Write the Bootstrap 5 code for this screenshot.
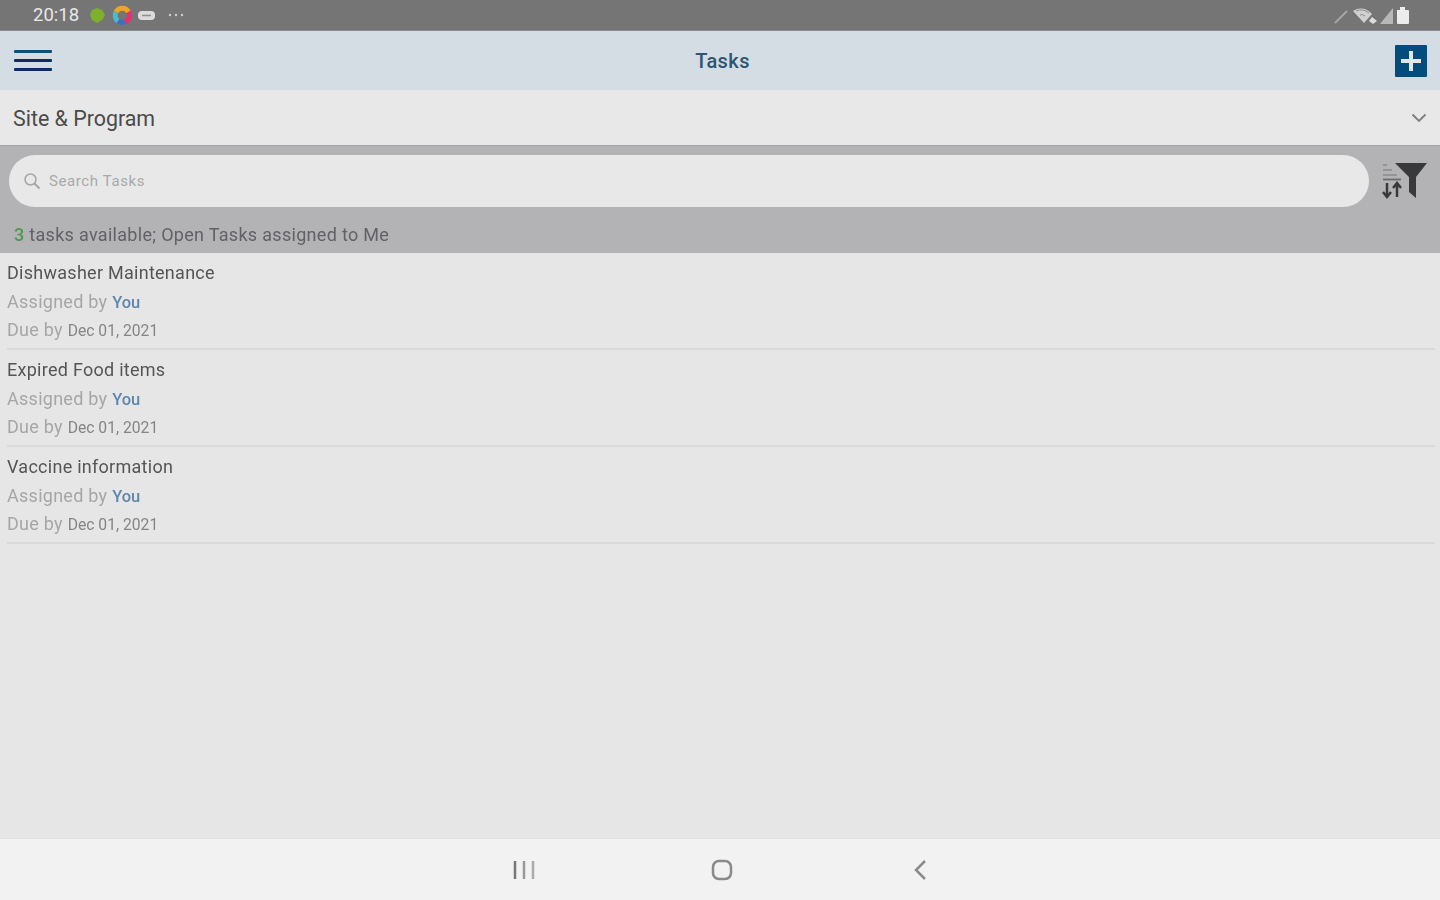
<!DOCTYPE html>
<html lang="en">
<head>
    <meta charset="UTF-8">
    <meta name="viewport" content="width=device-width, initial-scale=1.0">
    <title>Tasks</title>
    <link href="https://cdn.jsdelivr.net/npm/bootstrap@5.3.0/dist/css/bootstrap.min.css" rel="stylesheet">
    <style>
        html, body { height: 100%; }
        body { font-family: Roboto, "Liberation Sans", sans-serif; background-color: #e6e6e6; overflow: hidden; }
        .screen { height: 900px; filter: blur(0.7px); }
        .status-bar { height: 31px; background-color: #757575; color: #e8e8e8; padding: 0 30px 0 33px; border-bottom: 1px solid #8a8a8a; }
        .status-time { font-size: 18.500px; line-height: 1; width: 47px; }
        .app-header { height: 59px; background-color: #d4dce4; padding: 0 13px 0 14px; }
        .app-title { font-size: 20px; letter-spacing: .4px; font-weight: 500; color: #2f5571; margin: 0 0 0 -2px; }
        .add-btn { width: 32px; height: 32px; background-color: #034c7c; border-radius: 1px; }
        .site-row { height: 55px; background-color: #e8e8e8; padding: 0 13px; font-size: 21.400px; color: #4a4a4a; }
        .site-label { padding-top: 4px; }
        .search-strip { background-color: #b3b3b6; height: 108px; border-top: 1px solid #a4a4a6; padding: 9px 13px 0 9px; }
        .search-pill { height: 52px; width: 1360px; border-radius: 26px; background-color: #e8e8e8; padding-left: 14px; color: #a9a9a9; font-size: 15px; letter-spacing: .6px; }
        .filter-icon { margin-top: 8px; margin-bottom: -8px; }
        .filter-note { font-size: 18px; line-height: 1; letter-spacing: .3px; color: #626266; margin: 19px 0 0 5px; }
        .filter-note b { color: #4c9a4c; font-weight: 500; }
        .task-list { padding: 0 5px 0 7px; }
        .task-item { height: 97px; border-bottom: 2px solid #dadada; padding-top: 6px; }
        .task-name, .task-line { font-size: 18px; line-height: 28.500px; letter-spacing: .27px; white-space: nowrap; }
        .task-name { color: #555; }
        .task-line { color: #a6a6a6; }
        .task-line .who { color: #5f86ad; font-size: 16.500px; font-weight: 500; line-height: 1; letter-spacing: 0; }
        .task-line .when { color: #858585; font-size: 15.700px; line-height: 1; letter-spacing: 0; }
        .nav-bar { height: 62px; background-color: #f2f2f2; border-top: 1px solid #e2e2e2; padding-left: 4px; }
        .nav-slot { width: 198px; }
    </style>
</head>
<body>
    <div class="screen d-flex flex-column">
        <div class="status-bar d-flex align-items-center justify-content-between flex-shrink-0">
            <div class="d-flex align-items-center">
                <span class="status-time">20:18</span>
                <svg width="110" height="22" viewBox="0 0 110 22">
                    <polygon points="17,4 22,6 25,11 22,16 17,19 12,16 10,11 12,6" fill="#7fb02c"/>
                    <g fill="none" stroke-width="5">
                        <path d="M36 8a7 7 0 0 1 12.500 0" stroke="#f0a22a"/>
                        <path d="M48.500 8a7 7 0 0 1-3.500 10" stroke="#e8306f"/>
                        <path d="M45 18a7 7 0 0 1-7-1" stroke="#3a6fc4"/>
                        <path d="M38 17a7 7 0 0 1-2-9" stroke="#48bcd0"/>
                    </g>
                    <rect x="58" y="7" width="17" height="9" rx="4" fill="#dcdcdc"/>
                    <path d="M62 11.500h9" stroke="#8f8f8f" stroke-width="1.500"/>
                    <circle cx="90" cy="11" r="1.200" fill="#cfcfcf"/><circle cx="96" cy="11" r="1.200" fill="#cfcfcf"/><circle cx="102" cy="11" r="1.200" fill="#cfcfcf"/>
                </svg>
            </div>
            <svg width="78" height="20" viewBox="0 0 78 20">
                <path d="M3 18 15 6" stroke="#a8a8a8" stroke-width="1.800"/>
                <path d="M21 6q10-6 19 3l-8 9z" fill="#d0d0d0"/>
                <path d="M24 6q7-3 13 2M28 10q3-1 5 1" stroke="#8f8f8f" fill="none"/>
                <path d="M40 12l5 4-4 3-4-3z" fill="#dcdcdc"/>
                <polygon points="48,19 61,3 61,19" fill="#b8b8b8"/>
                <path d="M65 5h3V2h5v3h3a1 1 0 0 1 1 1v12a1 1 0 0 1-1 1H66a1 1 0 0 1-1-1z" fill="#ececec"/>
            </svg>
        </div>

        <div class="app-header d-flex align-items-center justify-content-between flex-shrink-0">
            <svg width="38" height="24" viewBox="0 0 38 24">
                <rect y="1" width="38" height="3" rx="1" fill="#0c5172"/>
                <rect y="10" width="38" height="3" rx="1" fill="#0a2f66"/>
                <rect y="19" width="38" height="3" rx="1" fill="#0a2f66"/>
            </svg>
            <span class="app-title">Tasks</span>
            <div class="add-btn d-flex align-items-center justify-content-center">
                <svg width="20" height="20" viewBox="0 0 20 20"><path d="M8 0h4v8h8v4h-8v8H8v-8H0V8h8z" fill="#dfe8ee"/></svg>
            </div>
        </div>

        <div class="site-row d-flex align-items-center justify-content-between flex-shrink-0">
            <span class="site-label">Site &amp; Program</span>
            <svg width="16" height="10" viewBox="0 0 16 10"><path d="M1.500 1.500 8 8l6.500-6.500" fill="none" stroke="#7d7d7d" stroke-width="1.800"/></svg>
        </div>

        <div class="search-strip flex-shrink-0">
            <div class="d-flex justify-content-between">
                <div class="search-pill d-flex align-items-center gap-2">
                    <svg width="18" height="18" viewBox="0 0 18 18"><circle cx="7.500" cy="7.500" r="5.500" fill="none" stroke="#a5a5a5" stroke-width="1.500"/><path d="m11.500 11.500 5 5" stroke="#a5a5a5" stroke-width="2"/></svg>
                    <span>Search Tasks</span>
                </div>
                <svg class="filter-icon" width="46" height="36" viewBox="0 0 46 36">
                    <path d="M14 0h32L35 14v21l-7-6V14z" fill="#38393b"/>
                    <path d="M2 2h4M2 7h9M2 12h14" stroke="#8a8a8d" stroke-width="1.500"/>
                    <path d="M2 16.500h18" stroke="#6c6c6f" stroke-width="1.800"/>
                    <path d="M6 20v14m-4-5 4 5 4-5M16 34V20m-4 5 4-5 4 5" fill="none" stroke="#38393b" stroke-width="2.500"/>
                </svg>
            </div>
            <div class="filter-note"><b>3</b> tasks available; Open Tasks assigned to Me</div>
        </div>

        <div class="task-list flex-grow-1">
            <div class="task-item">
                <div class="task-name">Dishwasher Maintenance</div>
                <div class="task-line">Assigned by <span class="who">You</span></div>
                <div class="task-line">Due by <span class="when">Dec 01, 2021</span></div>
            </div>
            <div class="task-item">
                <div class="task-name">Expired Food items</div>
                <div class="task-line">Assigned by <span class="who">You</span></div>
                <div class="task-line">Due by <span class="when">Dec 01, 2021</span></div>
            </div>
            <div class="task-item">
                <div class="task-name">Vaccine information</div>
                <div class="task-line">Assigned by <span class="who">You</span></div>
                <div class="task-line">Due by <span class="when">Dec 01, 2021</span></div>
            </div>
        </div>

        <div class="nav-bar d-flex align-items-center justify-content-center flex-shrink-0">
            <div class="nav-slot text-center">
                <svg width="22" height="18" viewBox="0 0 22 18"><path d="M2 0v18" stroke="#777" stroke-width="2.500"/><path d="M11 0v18" stroke="#999" stroke-width="2.500"/><path d="M20 0v18" stroke="#aaa" stroke-width="2.500"/></svg>
            </div>
            <div class="nav-slot text-center">
                <svg width="22" height="22" viewBox="0 0 22 22"><rect x="2" y="2" width="18" height="18" rx="6" fill="none" stroke="#8a8a8a" stroke-width="2.500"/></svg>
            </div>
            <div class="nav-slot text-center">
                <svg width="14" height="22" viewBox="0 0 14 22"><path d="M12 2 3 11l9 9" fill="none" stroke="#8a8a8a" stroke-width="2.500"/></svg>
            </div>
        </div>
    </div>
    <script src="https://cdn.jsdelivr.net/npm/bootstrap@5.3.0/dist/js/bootstrap.bundle.min.js"></script>
</body>
</html>
